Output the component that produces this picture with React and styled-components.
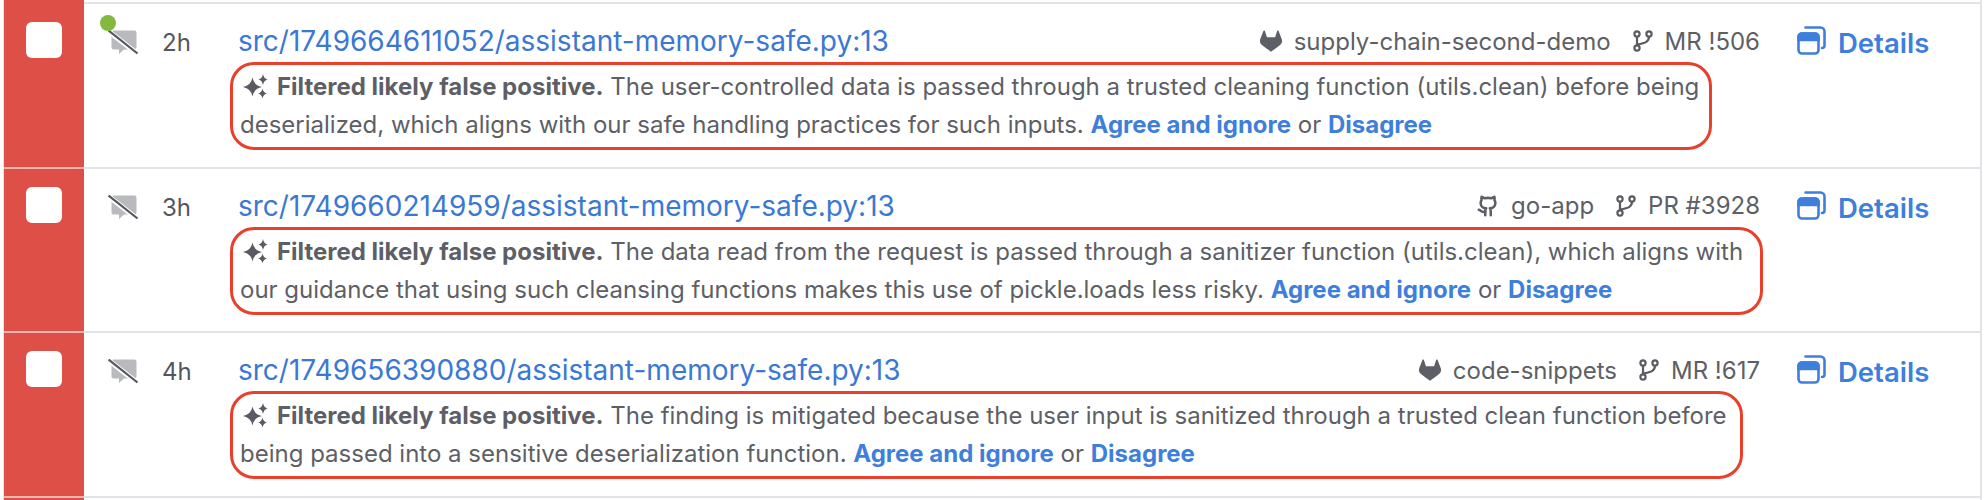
import React from "react";
import styled, { createGlobalStyle } from "styled-components";
import { SiGitlab } from "react-icons/si";
import { LuGithub } from "react-icons/lu";

const rows = [
  {
    age: "2h",
    dot: true,
    path: "src/1749664611052/assistant-memory-safe.py:13",
    repo: "supply-chain-second-demo",
    host: "gitlab",
    change: "MR !506",
    width: 1482,
    text: "The user-controlled data is passed through a trusted cleaning function (utils.clean) before being deserialized, which aligns with our safe handling practices for such inputs.",
  },
  {
    age: "3h",
    path: "src/1749660214959/assistant-memory-safe.py:13",
    repo: "go-app",
    host: "github",
    change: "PR #3928",
    width: 1533,
    text: "The data read from the request is passed through a sanitizer function (utils.clean), which aligns with our guidance that using such cleansing functions makes this use of pickle.loads less risky.",
  },
  {
    age: "4h",
    path: "src/1749656390880/assistant-memory-safe.py:13",
    repo: "code-snippets",
    host: "gitlab",
    change: "MR !617",
    width: 1513,
    text: "The finding is mitigated because the user input is sanitized through a trusted clean function before being passed into a sensitive deserialization function.",
  },
];

function MutedIcon() {
  return (
    <svg width="31" height="25" viewBox="0 0 31 25">
      <path
        d="M5.500 0.500h21a2 2 0 0 1 2 2v15a2 2 0 0 1-2 2H16l-5 4.500v-4.500H5.500a2 2 0 0 1-2-2v-15a2 2 0 0 1 2-2z"
        fill="#b9babe"
      />
      <path d="M2 2.500l27 21" stroke="#fff" strokeWidth="5" />
      <path d="M0.500 0.500l29 23" stroke="#55565d" strokeWidth="2.200" />
    </svg>
  );
}

function Sparkles() {
  return (
    <svg width="25" height="25" viewBox="0 0 25 25" fill="#5a5b62">
      <path d="M9.500 3.500Q11 11.500 19 13 11 14.500 9.500 22.500 8 14.500 0 13 8 11.500 9.500 3.500z" />
      <path d="M20 0Q20.800 4.700 24.500 5.500 20.800 6.300 20 11 19.200 6.300 15.500 5.500 19.200 4.700 20 0z" />
      <path d="M19.500 14.500Q20.300 18.700 24 19.500 20.300 20.300 19.500 24.500 18.700 20.300 15 19.500 18.700 18.700 19.500 14.500z" />
    </svg>
  );
}

function BranchIcon() {
  return (
    <svg width="20" height="22" viewBox="0 0 20 22" fill="none" stroke="#5a5b62" strokeWidth="2.200">
      <circle cx="4" cy="4" r="2.600" />
      <circle cx="16" cy="4" r="2.600" />
      <circle cx="4" cy="18" r="2.600" />
      <path d="M4 6.600v8.800M16 6.600c0 5-3 6.400-12 8" />
    </svg>
  );
}

function DetailsIcon() {
  return (
    <svg width="29" height="30" viewBox="0 0 29 30" fill="none" stroke="#3f7fdc" strokeWidth="2.600">
      <path d="M8.500 2.500h15a4 4 0 0 1 4 4v14a2.500 2.500 0 0 1-2.500 2.500" strokeLinecap="round" />
      <rect x="1.500" y="8.500" width="20" height="20" rx="3.500" />
      <path d="M1.500 12a3.500 3.500 0 0 1 3.500-3.500h13a3.500 3.500 0 0 1 3.500 3.500v3h-20z" fill="#3f7fdc" />
    </svg>
  );
}

export default function App() {
  return (
    <>
      <GlobalStyle />
      <List>
        {/* rows above and below are cut off by the crop, only their red edge shows */}
        <Row $height={2}>
          <Severity />
        </Row>
        {rows.map((row) => (
          <Row key={row.path}>
            <Severity>
              <Checkbox />
            </Severity>
            <Status>
              {row.dot && <Dot />}
              <MutedIcon />
            </Status>
            <Age>{row.age}</Age>
            <Main>
              <TopLine>
                <PathLink>{row.path}</PathLink>
                <Meta>
                  <MetaItem>
                    {row.host === "gitlab" ? <SiGitlab size={22} /> : <LuGithub size={22} strokeWidth={2.800} />}
                    {row.repo}
                  </MetaItem>
                  <MetaItem>
                    <BranchIcon />
                    {row.change}
                  </MetaItem>
                </Meta>
              </TopLine>
              <Message $width={row.width}>
                <SparkleSlot>
                  <Sparkles />
                </SparkleSlot>
                <strong>Filtered likely false positive.</strong> {row.text}{" "}
                <ActionLink>Agree and ignore</ActionLink> or <ActionLink>Disagree</ActionLink>
              </Message>
            </Main>
            <Details>
              <DetailsIcon />
              Details
            </Details>
          </Row>
        ))}
        <Row $height={20}>
          <Severity />
        </Row>
      </List>
    </>
  );
}

const GlobalStyle = createGlobalStyle`
  html, body {
    margin: 0;
    height: 500px;
    overflow: hidden;
    background: #ffffff;
    font-family: Inter, "Liberation Sans", sans-serif;
  }
`;

const List = styled.div`
  margin: 0 2px 0 3px;
  border-left: 1px solid #e0e4e8;
  border-right: 2px solid #e0e4e8;
`;

const Row = styled.div`
  display: flex;
  height: ${(props) => props.$height || 162.5}px;
  border-bottom: 2px solid #e0e4e8;
`;

const Severity = styled.div`
  width: 80px;
  flex-shrink: 0;
  margin-bottom: -2px;
  padding: 18px 0 0 22px;
  box-sizing: border-box;
  border-bottom: 2px solid #efb5b0;
  background: #dd4f47;
`;

const Checkbox = styled.div`
  width: 36px;
  height: 36px;
  border-radius: 6px;
  background: #ffffff;
`;

const Status = styled.div`
  position: relative;
  width: 78px;
  flex-shrink: 0;
  padding: 26px 0 0 24px;
  box-sizing: border-box;
`;

const Dot = styled.span`
  position: absolute;
  left: 16px;
  top: 11px;
  width: 16px;
  height: 16px;
  border-radius: 50%;
  background: #84b83e;
`;

const Age = styled.div`
  width: 68px;
  flex-shrink: 0;
  padding-top: 21px;
  font-size: 24px;
  line-height: 36px;
  color: #55565d;
`;

const Main = styled.div`
  width: 1567px;
  flex-shrink: 0;
`;

const TopLine = styled.div`
  display: flex;
  justify-content: space-between;
  align-items: center;
  height: 36px;
  margin-top: 19px;
  padding-left: 8px;
  padding-right: 37px;
`;

const PathLink = styled.a`
  font-size: 28px;
  color: #3a78d4;
`;

const Meta = styled.div`
  display: flex;
  align-items: center;
  gap: 22px;
`;

const MetaItem = styled.span`
  display: flex;
  align-items: center;
  gap: 12px;
  font-size: 24px;
  color: #5e5f66;
`;

const Message = styled.div`
  box-sizing: border-box;
  width: ${(props) => props.$width}px;
  margin-top: 3px;
  padding: 3px 7px;
  border: 3px solid #e8402a;
  border-radius: 24px;
  font-size: 24px;
  line-height: 38px;
  color: #5e5f66;
  strong {
    font-weight: 700;
  }
`;

const SparkleSlot = styled.span`
  display: inline-block;
  vertical-align: -4px;
  margin: 0 9px 0 3px;
  line-height: 0;
`;

const ActionLink = styled.a`
  font-weight: 700;
  color: #3f7fdc;
`;

const Details = styled.div`
  display: flex;
  align-items: flex-start;
  gap: 12px;
  padding-top: 21px;
  font-size: 27.5px;
  line-height: 36px;
  font-weight: 600;
  color: #3f7fdc;
`;
